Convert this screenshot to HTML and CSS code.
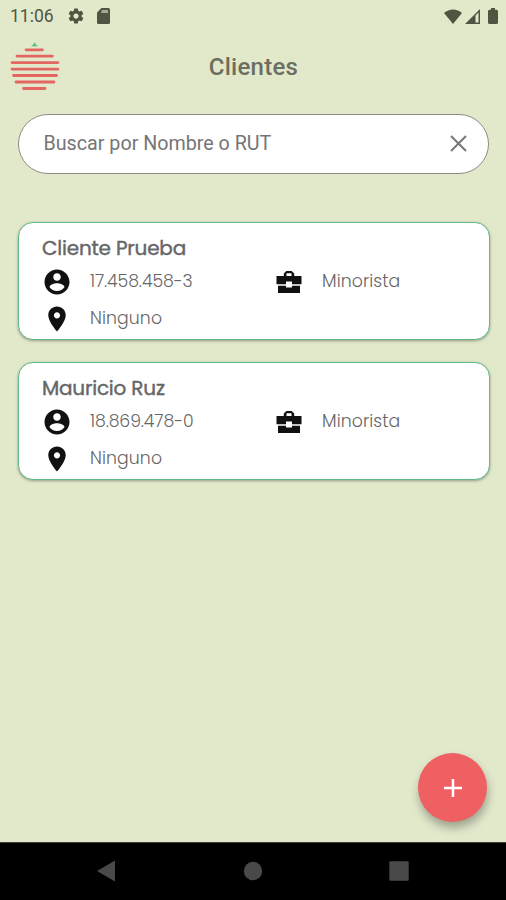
FILE: index.html
```html
<!DOCTYPE html>
<html lang="es">
<head>
    <meta charset="UTF-8">
    <title>Clientes</title>
    <meta name="viewport" content="width=device-width, initial-scale=1.0">
    <link rel="stylesheet" href="styles.css">
</head>
<body>
    <!-- shared card icons -->
    <svg class="sprite">
        <symbol id="account" viewBox="0 0 24 24">
            <path d="M12 2C6.48 2 2 6.48 2 12s4.48 10 10 10 10-4.48 10-10S17.52 2 12 2zm0 3c1.66 0 3 1.34 3 3s-1.34 3-3 3-3-1.34-3-3 1.34-3 3-3zm0 14.2c-2.5 0-4.71-1.28-6-3.22.03-1.99 4-3.08 6-3.08 1.99 0 5.97 1.09 6 3.08-1.29 1.94-3.5 3.22-6 3.22z"/>
        </symbol>
        <symbol id="place" viewBox="0 0 24 24">
            <path d="M12 2C8.13 2 5 5.13 5 9c0 5.25 7 13 7 13s7-7.75 7-13c0-3.87-3.13-7-7-7zm0 9.5c-1.38 0-2.5-1.12-2.5-2.5s1.12-2.5 2.5-2.5 2.5 1.12 2.5 2.5-1.12 2.5-2.5 2.5z"/>
        </symbol>
        <symbol id="briefcase" viewBox="0 0 30 30">
            <path fill-rule="evenodd" d="M2.500 9H9.800V6.500L12.300 4h5.400L20.200 6.500V9h7.300v8.300H18V14.500h-6v2.800H2.500zM12.500 9h5V6.300h-5zM4 18.800h8v1.700h6v-1.700h8V26H4z"/>
        </symbol>
    </svg>

    <div class="status-bar">
        <span class="clock">11:06</span>
        <svg class="gear" viewBox="0 0 24 24"><path d="M19.430 12.980c.04-.32.07-.64.07-.98s-.03-.66-.07-.98l2.110-1.650c.19-.15.24-.42.12-.64l-2-3.460c-.12-.22-.39-.3-.61-.22l-2.490 1c-.52-.4-1.080-.73-1.690-.98l-.38-2.650C14.460 2.180 14.250 2 14 2h-4c-.25 0-.46.18-.49.42l-.38 2.650c-.61.25-1.170.59-1.690.98l-2.490-1c-.23-.09-.49 0-.61.22l-2 3.460c-.13.22-.07.49.12.64l2.110 1.650c-.04.32-.07.65-.07.98s.03.66.07.98l-2.110 1.650c-.19.15-.24.42-.12.64l2 3.460c.12.22.39.3.61.22l2.490-1c.52.4 1.080.73 1.690.98l.38 2.650c.03.24.24.42.49.42h4c.25 0 .46-.18.49-.42l.38-2.650c.61-.25 1.170-.59 1.690-.98l2.490 1c.23.09.49 0 .61-.22l2-3.460c.12-.22.07-.49-.12-.64l-2.110-1.650zM12 15.500c-1.930 0-3.500-1.570-3.500-3.500s1.570-3.500 3.500-3.500 3.500 1.570 3.500 3.500-1.570 3.500-3.500 3.500z"/></svg>
        <svg class="sd" viewBox="0 0 13 16"><path d="M4.500 0H11.500Q13 0 13 1.500V14.500Q13 16 11.500 16H1.500Q0 16 0 14.500V4.500z"/><path class="sd-pins" d="M5 2h6v3H4z"/></svg>
        <div class="signals">
            <svg class="wifi" viewBox="0 0 18 15"><path d="M9 15L0 4Q4 .5 9 .5T18 4z"/></svg>
            <svg class="cell" viewBox="0 0 15 15"><path fill-rule="evenodd" d="M15 0V15H0zM10.500 6.500V13.500H13.500V3.500z"/></svg>
            <svg class="battery" viewBox="0 0 10 16"><path d="M3 0h4v1.800h1.500Q10 1.800 10 3.300V14.500Q10 16 8.500 16h-7Q0 16 0 14.500V3.300Q0 1.800 1.500 1.800H3z"/></svg>
        </div>
    </div>

    <header class="header">
        <svg class="logo" viewBox="0 0 50 50">
            <path class="leaf" d="M21 5.200L23.300 3.500 24.500 1 25.700 3.500l2.600 1.700z"/>
            <path class="stripes" d="M16 8.800h16.500M7 15.100h35.500M2 21.600h46M2 28.100h46M3.500 34.500h43M6 41h38M13.500 47.500h21.500"/>
        </svg>
        <h1>Clientes</h1>
    </header>

    <main class="content">
        <div class="search">
            <span>Buscar por Nombre o RUT</span>
            <svg class="clear" viewBox="0 0 17 17"><path d="M1 1l15 15M16 1L1 16"/></svg>
        </div>

        <div class="card">
            <h2>Cliente Prueba</h2>
            <div class="row">
                <div class="field"><svg><use href="#account"/></svg><span class="rut">17.458.458-3</span></div>
                <div class="field"><svg><use href="#briefcase"/></svg><span>Minorista</span></div>
            </div>
            <div class="row">
                <div class="field"><svg><use href="#place"/></svg><span>Ninguno</span></div>
            </div>
        </div>

        <div class="card">
            <h2>Mauricio Ruz</h2>
            <div class="row">
                <div class="field"><svg><use href="#account"/></svg><span class="rut">18.869.478-0</span></div>
                <div class="field"><svg><use href="#briefcase"/></svg><span>Minorista</span></div>
            </div>
            <div class="row">
                <div class="field"><svg><use href="#place"/></svg><span>Ninguno</span></div>
            </div>
        </div>
    </main>

    <div class="fab">
        <svg viewBox="0 0 18 18"><path d="M9 0v18M0 9h18"/></svg>
    </div>

    <nav class="nav-bar">
        <svg viewBox="0 0 20 22"><path d="M19 .5v21L1 11z"/></svg>
        <svg viewBox="0 0 20 22"><circle cx="10" cy="11" r="9.200"/></svg>
        <svg viewBox="0 0 20 22"><rect x=".3" y="1.300" width="19.400" height="19.400" rx="1"/></svg>
    </nav>
</body>
</html>
```

FILE: styles.css
```css
:root {
    --bg: #e2e9cb;
    --status: #505542;
    --green: #5fba87;
    --red: #ee6062;
    --text: #666;
}
* {
    box-sizing: border-box;
}
body {
    margin: 0;
    height: 900px;
    display: flex;
    flex-direction: column;
    overflow: hidden;
    position: relative;
    background: var(--bg);
    color: var(--text);
    font-family: Roboto, sans-serif;
}
svg {
    display: block;
    flex: none;
}
.sprite {
    width: 0;
    height: 0;
    position: absolute;
}
.status-bar {
    height: 32px;
    padding: 0 8px 0 10px;
    display: flex;
    align-items: center;
    color: var(--status);
    fill: var(--status);
}
.clock {
    width: 57px;
    font-size: 17.500px;
}
.gear {
    width: 18px;
    height: 18px;
}
.sd {
    width: 13px;
    height: 16px;
    margin-left: 12px;
}
.sd-pins {
    fill: #a5aa92;
}
.signals {
    display: flex;
    align-items: center;
    margin-left: auto;
}
.wifi {
    width: 18px;
    height: 15px;
}
.cell {
    width: 15px;
    height: 15px;
    margin-left: 3px;
}
.battery {
    width: 10px;
    height: 16px;
    margin-left: 8px;
}
.header {
    height: 82px;
    padding: 9px 10px 0;
    display: flex;
    align-items: flex-start;
}
.logo {
    width: 50px;
    height: 50px;
}
.leaf {
    fill: #55bd83;
}
.stripes {
    stroke: #e46663;
    stroke-width: 2.800;
    stroke-linecap: round;
}
h1 {
    flex: 1;
    margin: 12px 49px 0 0;
    text-align: center;
    font-size: 24px;
    line-height: 28px;
    font-weight: 500;
    letter-spacing: .25px;
    color: #6b6e61;
}
.content {
    flex: 1;
    padding: 0 16px 0 18px;
}
.search {
    height: 60px;
    width: 471px;
    padding: 0 21px 2px 24.500px;
    margin-bottom: 48px;
    display: flex;
    align-items: center;
    justify-content: space-between;
    background: #fff;
    border: 1.500px solid #8a8c82;
    border-radius: 30px;
    font-size: 19.700px;
    color: #757575;
}
.clear {
    width: 17px;
    height: 17px;
    margin-top: 1px;
    stroke: #777;
    stroke-width: 2;
}
.card {
    height: 118px;
    padding: 9px 0 0 23px;
    margin-bottom: 22px;
    background: #fff;
    border: 1.500px solid var(--green);
    border-radius: 15px;
    box-shadow: 0 1px 3px rgba(0, 0, 0, .35);
    font-family: Poppins, Inter, sans-serif;
}
h2 {
    margin: 0;
    height: 35px;
    font-size: 20px;
    line-height: 33px;
    font-weight: 400;
    letter-spacing: -.2px;
    -webkit-text-stroke: .400px var(--text);
}
.row {
    display: flex;
    height: 37px;
}
.field {
    flex: none;
    width: 232px;
    height: 30px;
    display: flex;
    align-items: center;
    gap: 18px;
    font-size: 17.300px;
    font-weight: 300;
    letter-spacing: .1px;
    white-space: nowrap;
}
.field span {
    padding-bottom: 2px;
}
.field .rut {
    letter-spacing: -.1px;
}
.field svg {
    width: 30px;
    height: 30px;
    fill: #111;
}
.fab {
    position: absolute;
    left: 418px;
    top: 753px;
    width: 69px;
    height: 69px;
    display: flex;
    align-items: center;
    justify-content: center;
    background: var(--red);
    border-radius: 50%;
    box-shadow: 1px 6px 10px rgba(0, 0, 0, .3);
}
.fab svg {
    width: 18px;
    height: 18px;
    stroke: #fff;
    stroke-width: 2.500;
}
.nav-bar {
    height: 58px;
    padding: 0 97px 1px 96px;
    display: flex;
    align-items: center;
    justify-content: space-between;
    background: #000;
    border-top: 1px solid #3c3e36;
    fill: #494949;
}
.nav-bar svg {
    width: 20px;
    height: 22px;
}
```
